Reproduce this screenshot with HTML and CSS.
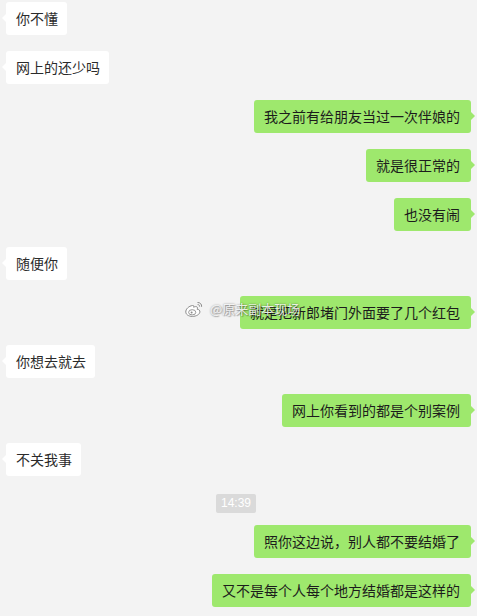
FILE: index.html
```html
<!DOCTYPE html>
<html lang="zh">
<head>
<meta charset="utf-8">
<link rel="stylesheet" href="styles.css">
</head>
<body>
<div class="chat">
  <div class="row left"><div class="bubble">你不懂</div></div>
  <div class="row left"><div class="bubble">网上的还少吗</div></div>
  <div class="row right"><div class="bubble">我之前有给朋友当过一次伴娘的</div></div>
  <div class="row right"><div class="bubble">就是很正常的</div></div>
  <div class="row right"><div class="bubble">也没有闹</div></div>
  <div class="row left"><div class="bubble">随便你</div></div>
  <div class="row right wm-row">
    <div class="bubble">就是把新郎堵门外面要了几个红包</div>
    <div class="watermark">
      <svg class="wb" width="20" height="18" viewBox="0 0 20 18">
        <path d="M8.5 5.5C5 6 1.5 9 1.8 12.2 2.1 15.3 6 16.8 9.8 16.3 13.8 15.8 16.4 13.4 15.8 11 15.4 9.6 14 9.3 13.2 9.4 13.9 7.6 13.3 6.5 11.6 6.6 10.6 6.7 9.8 7.1 9.6 7.2 10 6 9.8 5.3 8.5 5.5Z" fill="#fff" stroke="#8a8a8a" stroke-width="1"/>
        <ellipse cx="8.2" cy="12.3" rx="3.6" ry="2.6" fill="none" stroke="#8a8a8a" stroke-width="0.9"/>
        <circle cx="7.6" cy="12.6" r="1" fill="#8a8a8a"/>
        <path d="M13.5 2.5C16 2.3 18 4.3 17.6 6.8" fill="none" stroke="#8a8a8a" stroke-width="1"/>
        <path d="M13.6 4.6C14.9 4.5 15.8 5.4 15.6 6.6" fill="none" stroke="#8a8a8a" stroke-width="1"/>
      </svg>
      <span class="wm-text">@原来副本现场</span>
    </div>
  </div>
  <div class="row left"><div class="bubble">你想去就去</div></div>
  <div class="row right"><div class="bubble">网上你看到的都是个别案例</div></div>
  <div class="row left"><div class="bubble">不关我事</div></div>
  <div class="row time"><span class="stamp">14:39</span></div>
  <div class="row right"><div class="bubble">照你这边说，别人都不要结婚了</div></div>
  <div class="row right"><div class="bubble">又不是每个人每个地方结婚都是这样的</div></div>
</div>
</body>
</html>
```
FILE: styles.css
```css
html, body {
  margin: 0;
  padding: 0;
}
body {
  background: #f3f3f3;
  width: 477px;
  height: 616px;
  overflow: hidden;
  font-family: "Noto Sans CJK SC", "Noto Sans", sans-serif;
}
.chat {
  display: flex;
  flex-direction: column;
  gap: 16px;
  padding: 2px 6px 0 6px;
}
.row {
  display: flex;
  position: relative;
}
.row.left { justify-content: flex-start; }
.row.right { justify-content: flex-end; }
.bubble {
  position: relative;
  height: 33px;
  line-height: 33px;
  font-size: 14px;
  padding: 0 10px;
  border-radius: 3px;
  white-space: nowrap;
}
.left .bubble {
  background: #ffffff;
  color: #2b2b2b;
  padding-right: 9px;
}
.right .bubble {
  background: #9ee86d;
  color: #1c1c1c;
  padding-right: 11px;
}
.left .bubble::before {
  content: "";
  position: absolute;
  left: -4px;
  top: 12px;
  border-style: solid;
  border-width: 4px 4px 4px 0;
  border-color: transparent #ffffff transparent transparent;
}
.right .bubble::after {
  content: "";
  position: absolute;
  right: -4px;
  top: 12px;
  border-style: solid;
  border-width: 4px 0 4px 4px;
  border-color: transparent transparent transparent #9ee86d;
}
.row.time {
  justify-content: flex-start;
  margin-top: 2px;
  margin-bottom: -4px;
  padding-left: 210px;
}
.stamp {
  display: inline-block;
  background: #dadada;
  color: #ffffff;
  font-family: "Liberation Sans", Arial, sans-serif;
  font-size: 12px;
  line-height: 19px;
  height: 19px;
  padding: 0 5px;
  border-radius: 2px;
}
.watermark {
  position: absolute;
  left: 178px;
  top: 3px;
  display: flex;
  align-items: center;
  gap: 6px;
}
.wb {
  display: block;
}
.wm-text {
  font-size: 13px;
  color: rgba(255, 255, 255, 0.85);
  text-shadow: 0 0 2px rgba(0, 0, 0, 0.45), 1px 1px 1px rgba(0, 0, 0, 0.25);
  white-space: nowrap;
}
```
